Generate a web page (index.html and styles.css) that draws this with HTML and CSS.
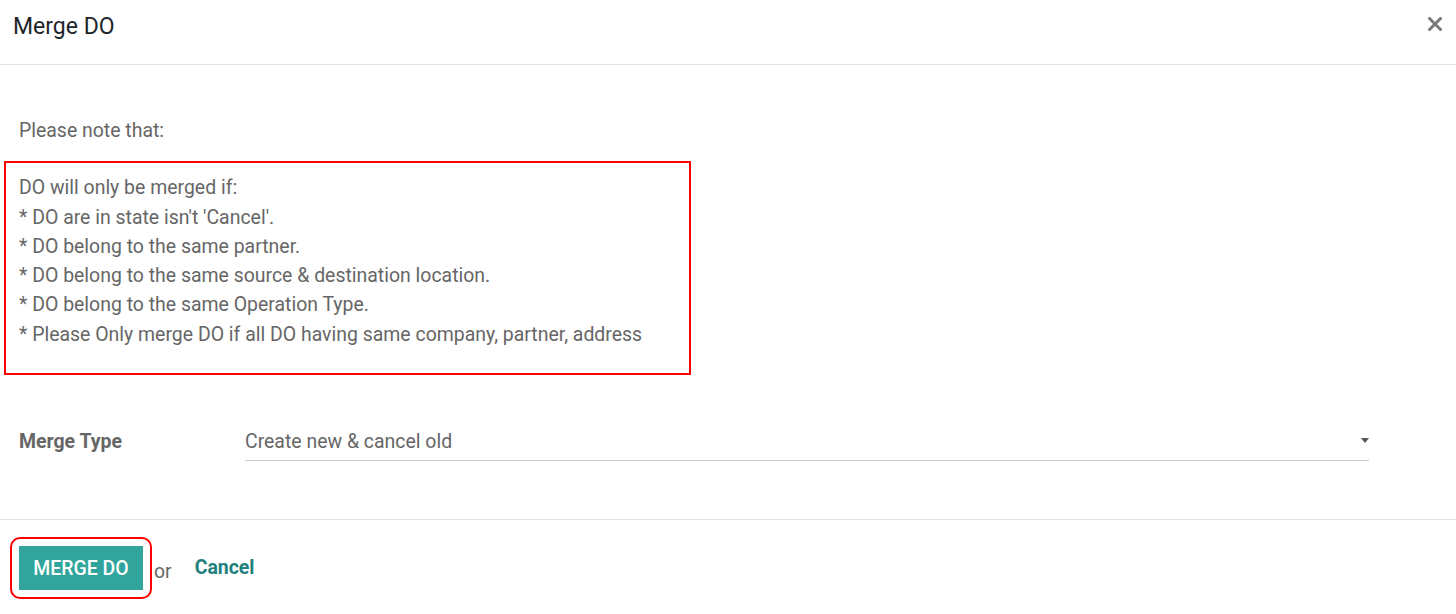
FILE: index.html
```html
<!DOCTYPE html>
<html>
<head>
<meta charset="utf-8">
<title>Merge DO</title>
<link rel="stylesheet" href="styles.css">
</head>
<body>
<div class="modal">
  <header class="modal-header">
    <h4 class="modal-title">Merge DO</h4>
    <button class="close" aria-label="Close">
      <svg width="14" height="14" viewBox="0 0 14 14"><path d="M1.5 1.5 L12.5 12.5 M12.5 1.5 L1.5 12.5" stroke="#7a7a7a" stroke-width="3" stroke-linecap="square"/></svg>
    </button>
  </header>
  <main class="modal-body">
    <p class="note">Please note that:</p>
    <div class="rules">
      <div>DO will only be merged if:</div>
      <div>* DO are in state isn't 'Cancel'.</div>
      <div>* DO belong to the same partner.</div>
      <div>* DO belong to the same source &amp; destination location.</div>
      <div>* DO belong to the same Operation Type.</div>
      <div>* Please Only merge DO if all DO having same company, partner, address</div>
    </div>
    <div class="field-row">
      <label class="field-label">Merge Type</label>
      <div class="select">
        <span class="select-value">Create new &amp; cancel old</span>
        <span class="caret"></span>
      </div>
    </div>
  </main>
  <footer class="modal-footer">
    <span class="highlight"><button class="btn-primary">MERGE DO</button></span>
    <span class="or">or</span>
    <a class="cancel" href="#">Cancel</a>
  </footer>
</div>
</body>
</html>
```

FILE: styles.css
```css
html, body {
  margin: 0;
  padding: 0;
  background: #fff;
}
body {
  font-family: Roboto, "Noto Sans", "Liberation Sans", sans-serif;
  font-size: 19.45px;
  line-height: 29.25px;
  color: #666666;
}
.modal {
  width: 1456px;
}
.modal-header {
  height: 65px;
  border-bottom: 1px solid #e1e3e8;
  display: flex;
  align-items: center;
  justify-content: space-between;
  box-sizing: border-box;
  padding: 0 13px 0 13px;
}
.modal-title {
  margin: 0;
  font-size: 23px;
  font-weight: 400;
  color: #212529;
  line-height: 30px;
  position: relative;
  top: -5px;
}
.close {
  border: 0;
  background: none;
  padding: 0;
  width: 14px;
  height: 14px;
  margin-right: 1px;
  position: relative;
  top: -8px;
  cursor: pointer;
}
.close svg {
  display: block;
}
.modal-body {
  padding: 51px 0 58px 0;
}
.note {
  margin: 0 0 16px 19px;
}
.rules {
  margin-left: 4px;
  width: 687px;
  box-sizing: border-box;
  border: 2px solid #ff0000;
  padding: 10px 0 24px 13px;
  white-space: nowrap;
}
.field-row {
  display: flex;
  align-items: flex-end;
  margin-top: 52px;
  padding-left: 19px;
}
.field-label {
  width: 226px;
  font-weight: 700;
  padding-bottom: 5px;
}
.select {
  width: 1124px;
  display: flex;
  align-items: center;
  justify-content: space-between;
  border-bottom: 1px solid #cccccc;
  padding-bottom: 4px;
}
.select-value {
  padding-left: 0;
}
.caret {
  width: 0;
  height: 0;
  border-left: 4px solid transparent;
  border-right: 4px solid transparent;
  border-top: 5px solid #555;
  margin-right: 0;
  position: relative;
  top: -1px;
}
.modal-footer {
  border-top: 1px solid #e1e3e8;
  padding: 17px 0 0 10px;
  display: flex;
  align-items: center;
}
.highlight {
  display: inline-block;
  border: 2px solid #ff0000;
  border-radius: 10px;
  padding: 7px;
}
.btn-primary {
  display: block;
  width: 124px;
  height: 44px;
  border: 0;
  border-radius: 0;
  background: #31a59b;
  color: #fff;
  font-family: Roboto, "Noto Sans", "Liberation Sans", sans-serif;
  font-size: 19.45px;
  font-weight: 500;
  padding: 0;
  line-height: 45px;
}
.or {
  margin-left: 2px;
  position: relative;
  top: 4px;
}
.cancel {
  margin-left: 23px;
  color: #22817c;
  font-weight: 700;
  text-decoration: none;
}
```
